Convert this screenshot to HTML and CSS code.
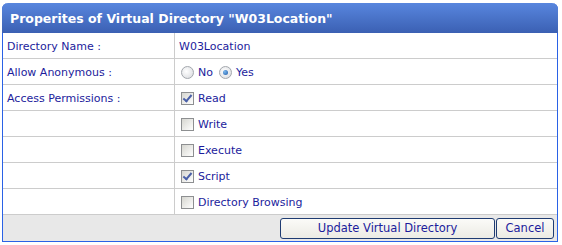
FILE: index.html
```html
<!DOCTYPE html>
<html lang="en">
<head>
  <meta charset="UTF-8" />
  <title>Virtual Directory Properties</title>
  <link rel="stylesheet" href="styles.css">
</head>
<body>
  <div class="panel">
    <div class="panel-title">Properites of Virtual Directory "W03Location"</div>
    <div class="row">
      <div class="label">Directory Name :</div>
      <div class="value">W03Location</div>
    </div>
    <div class="row">
      <div class="label">Allow Anonymous :</div>
      <div class="value">
        <label class="opt"><input type="radio" name="anon"> No</label>
        <label class="opt"><input type="radio" name="anon" checked> Yes</label>
      </div>
    </div>
    <div class="row">
      <div class="label">Access Permissions :</div>
      <div class="value"><label class="opt"><input type="checkbox" checked> Read</label></div>
    </div>
    <div class="row">
      <div class="label"></div>
      <div class="value"><label class="opt"><input type="checkbox"> Write</label></div>
    </div>
    <div class="row">
      <div class="label"></div>
      <div class="value"><label class="opt"><input type="checkbox"> Execute</label></div>
    </div>
    <div class="row">
      <div class="label"></div>
      <div class="value"><label class="opt"><input type="checkbox" checked> Script</label></div>
    </div>
    <div class="row">
      <div class="label"></div>
      <div class="value"><label class="opt"><input type="checkbox"> Directory Browsing</label></div>
    </div>
    <div class="footer">
      <button class="btn btn-update">Update Virtual Directory</button>
      <button class="btn btn-cancel">Cancel</button>
    </div>
  </div>
</body>
</html>
```

FILE: styles.css
```css
body {
  margin: 0;
  padding: 3px 0 0 2px;
  background: #ffffff;
  font-family: "DejaVu Sans", Verdana, sans-serif;
  font-size: 11px;
  color: #1c1c9c;
}
.panel {
  width: 556px;
  box-sizing: border-box;
  border: 1px solid #2a62e6;
  border-top: none;
  border-radius: 6px 6px 0 0;
}
.panel-title {
  height: 30px;
  line-height: 31px;
  padding-left: 8px;
  margin: 0 -1px;
  border-radius: 6px 6px 0 0;
  background: linear-gradient(#5886de, #3b60b3);
  color: #ffffff;
  font-weight: bold;
  font-size: 12.5px;
}
.row {
  display: flex;
  height: 26px;
  box-sizing: border-box;
  border-bottom: 1px solid #cccccc;
}
.label {
  width: 172px;
  flex: none;
  display: flex;
  align-items: center;
  padding: 1px 0 0 4px;
  box-sizing: border-box;
  border-right: 1px solid #cccccc;
}
.value {
  flex: 1;
  display: flex;
  align-items: center;
  padding: 1px 0 0 4px;
}
.opt {
  display: inline-flex;
  align-items: center;
  margin-right: 4px;
}
.opt input {
  appearance: none;
  -webkit-appearance: none;
  margin: 0 4px 0 2px;
  width: 13px;
  height: 13px;
  border: 1px solid #8d8f91;
  background: linear-gradient(135deg, #d6d6d0, #ffffff);
  position: relative;
}
.opt input[type="radio"] {
  border-radius: 50%;
  border-color: #a3a7ad;
  background: radial-gradient(circle at 40% 40%, #ffffff, #d6d8dc);
}
.opt input[type="radio"]:checked::after {
  content: "";
  position: absolute;
  left: 3px;
  top: 3px;
  width: 5px;
  height: 5px;
  border-radius: 50%;
  background: radial-gradient(circle at 35% 35%, #7ab8ee, #1f5aa8);
}
.opt input[type="checkbox"]:checked::after {
  content: "";
  position: absolute;
  left: 3px;
  top: 0px;
  width: 3px;
  height: 7px;
  border: solid #4a60a8;
  border-width: 0 2px 2px 0;
  transform: rotate(40deg);
}
.footer {
  height: 26px;
  background: #e8e8e8;
  display: flex;
  justify-content: flex-end;
  align-items: center;
  gap: 1px;
  padding-right: 3px;
}
.btn {
  height: 21px;
  font-family: "DejaVu Sans", Verdana, sans-serif;
  font-size: 11.5px;
  color: #1c1c9c;
  background: linear-gradient(#fbfbf8, #ecebe4);
  border: 1px solid #1f3c72;
  border-radius: 3px;
  padding: 0;
}
.btn-update {
  width: 215px;
}
.btn-cancel {
  width: 58px;
}
```
